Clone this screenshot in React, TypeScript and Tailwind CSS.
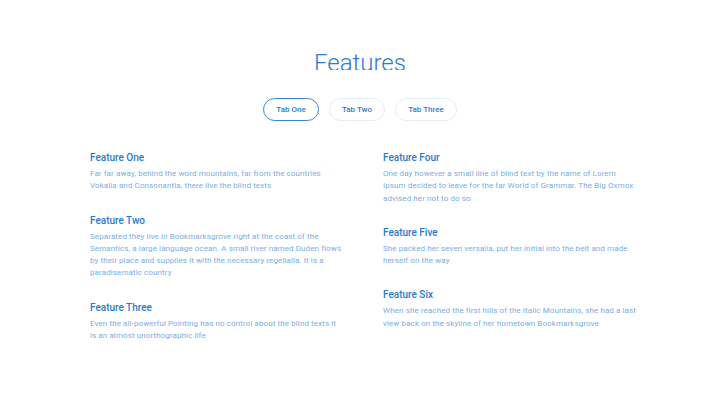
import React from "react";

const left = [
  { t: "Feature One", d: "Far far away, behind the word mountains, far from the countries Vokalia and Consonantia, there live the blind texts" },
  { t: "Feature Two", d: "Separated they live in Bookmarksgrove right at the coast of the Semantics, a large language ocean. A small river named Duden flows by their place and supplies it with the necessary regelialia. It is a paradisematic country" },
  { t: "Feature Three", d: "Even the all-powerful Pointing has no control about the blind texts it is an almost unorthographic life" },
];
const right = [
  { t: "Feature Four", d: "One day however a small line of blind text by the name of Lorem Ipsum decided to leave for the far World of Grammar. The Big Oxmox advised her not to do so" },
  { t: "Feature Five", d: "She packed her seven versalia, put her initial into the belt and made herself on the way" },
  { t: "Feature Six", d: "When she reached the first hills of the Italic Mountains, she had a last view back on the skyline of her hometown Bookmarksgrove" },
];

function Col({ items }: { items: { t: string; d: string }[] }) {
  return (
    <div className="flex flex-col gap-[21px] w-[254px]">
      {items.map((it) => (
        <div key={it.t}>
          <h3 className="text-[10px] leading-[14px] font-medium text-[#2a79cd]">{it.t}</h3>
          <p className="mt-[3px] text-[8px] leading-[12.3px] tracking-[0.1px] text-[#78aee6]">{it.d}</p>
        </div>
      ))}
    </div>
  );
}

export default function App() {
  return (
    <div className="w-[720px] h-[403px] bg-white" style={{ fontFamily: "Roboto, 'Liberation Sans', sans-serif" }}>
      <div className="pt-[48px] flex justify-center">
        <div className="h-[22px] overflow-hidden">
          <h1 className="text-[24px] leading-[30px] font-light text-[#2b7bd0]">Features</h1>
        </div>
      </div>
      <div className="mt-[28px] flex justify-center gap-[10px]">
        <button className="w-[56px] h-[23px] rounded-full border border-[#3a86d4] text-[8px] font-medium text-[#2b7bd0]">Tab One</button>
        <button className="w-[56px] h-[23px] rounded-full border border-[#e2edf9] text-[8px] font-medium text-[#2b7bd0]">Tab Two</button>
        <button className="w-[62px] h-[23px] rounded-full border border-[#e2edf9] text-[8px] font-medium text-[#2b7bd0]">Tab Three</button>
      </div>
      <div className="mt-[30px] pl-[90px] flex gap-[39px]">
        <Col items={left} />
        <Col items={right} />
      </div>
    </div>
  );
}
